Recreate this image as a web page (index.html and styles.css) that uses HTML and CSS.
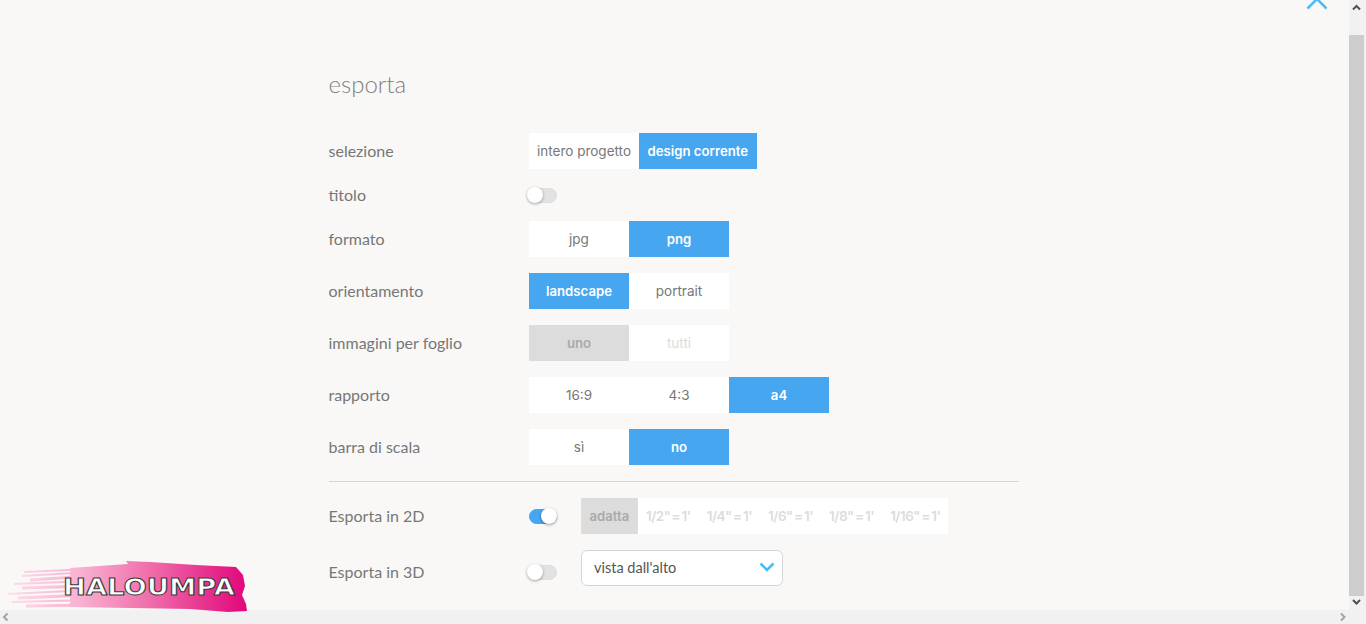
FILE: index.html
```html
<!DOCTYPE html>
<html lang="it">
<head>
  <meta charset="UTF-8" />
  <title>esporta</title>
  <link rel="stylesheet" href="styles.css">
</head>
<body>
  <div class="window">
    <div class="view">
      <svg class="close-btn" width="24" height="14" viewBox="0 0 24 14"><path d="M2.500 11.500 L12 2 L21.500 11.500" fill="none" stroke="#45bdf8" stroke-width="2.500"/></svg>
      <main class="panel">
        <h1 class="title">esporta</h1>
        <div class="rows">
          <div class="row">
            <span class="label">selezione</span>
            <div class="seg">
              <button class="opt auto">intero progetto</button>
              <button class="opt auto on">design corrente</button>
            </div>
          </div>
          <div class="row short">
            <span class="label">titolo</span>
            <span class="toggle"></span>
          </div>
          <div class="row">
            <span class="label">formato</span>
            <div class="seg">
              <button class="opt">jpg</button>
              <button class="opt on">png</button>
            </div>
          </div>
          <div class="row">
            <span class="label">orientamento</span>
            <div class="seg">
              <button class="opt on">landscape</button>
              <button class="opt">portrait</button>
            </div>
          </div>
          <div class="row">
            <span class="label">immagini per foglio</span>
            <div class="seg">
              <button class="opt grey">uno</button>
              <button class="opt off">tutti</button>
            </div>
          </div>
          <div class="row">
            <span class="label">rapporto</span>
            <div class="seg">
              <button class="opt">16:9</button>
              <button class="opt">4:3</button>
              <button class="opt on">a4</button>
            </div>
          </div>
          <div class="row">
            <span class="label">barra di scala</span>
            <div class="seg">
              <button class="opt">sì</button>
              <button class="opt on">no</button>
            </div>
          </div>
          <hr class="divider">
          <div class="row">
            <span class="label">Esporta in 2D</span>
            <span class="toggle active"></span>
            <div class="seg scale">
              <button class="opt small grey">adatta</button>
              <button class="opt small off">1/2" = 1'</button>
              <button class="opt small off">1/4" = 1'</button>
              <button class="opt small off">1/6" = 1'</button>
              <button class="opt small off">1/8" = 1'</button>
              <button class="opt small off">1/16" = 1'</button>
            </div>
          </div>
          <div class="row low">
            <span class="label">Esporta in 3D</span>
            <span class="toggle"></span>
            <div class="select">
              <span>vista dall'alto</span>
              <svg width="16" height="10" viewBox="0 0 16 10"><path d="M1.500 1.500 L8 8 L14.500 1.500" fill="none" stroke="#45bdf8" stroke-width="2.500"/></svg>
            </div>
          </div>
        </div>
      </main>
    </div>
    <div class="vbar">
      <svg class="arrow" width="15" height="17" viewBox="0 0 15 17"><path d="M4 9.500 L7.500 6 L11 9.500" fill="none" stroke="#505050" stroke-width="2"/></svg>
      <div class="vthumb"></div>
      <svg class="arrow" width="15" height="17" viewBox="0 0 15 17"><path d="M4 7 L7.500 10.500 L11 7" fill="none" stroke="#505050" stroke-width="2"/></svg>
    </div>
  </div>
  <div class="hbar">
    <svg width="17" height="14" viewBox="0 0 17 14"><path d="M7.500 3.500 L4 7 L7.500 10.500" fill="none" stroke="#a3a3a3" stroke-width="2"/></svg>
    <svg width="32" height="14" viewBox="0 0 32 14"><path d="M7 3.500 L10.500 7 L7 10.500" fill="none" stroke="#a3a3a3" stroke-width="2"/></svg>
  </div>

  <div class="logo">
    <svg width="250" height="56" viewBox="0 0 250 56">
      <defs>
        <linearGradient id="brush" gradientUnits="userSpaceOnUse" x1="5" x2="245" y1="0" y2="0">
          <stop offset="0" stop-color="#fde0ec"/>
          <stop offset="0.3" stop-color="#f9b4d2"/>
          <stop offset="0.6" stop-color="#f06eab"/>
          <stop offset="1" stop-color="#e2087c"/>
        </linearGradient>
      </defs>
      <g fill="none" stroke="url(#brush)">
        <path stroke-width="2" d="M24 13 L90 10"/>
        <path stroke-width="2" d="M22 17 L90 13"/>
        <path stroke-width="3" d="M30 21 L90 17"/>
        <path stroke-width="2" d="M14 25 L90 22"/>
        <path stroke-width="3" d="M22 29 L90 27"/>
        <path stroke-width="2" d="M8 35 L90 31"/>
        <path stroke-width="3" d="M18 39 L90 36"/>
        <path stroke-width="2" d="M12 43 L90 41"/>
        <path stroke-width="3" d="M26 47 L90 46"/>
      </g>
      <path fill="url(#brush)" d="M70 9 L128 5 L126 2 L150 3 L196 6 L236 8 L243 16 L245 27 L242 36 L246 45 L247 52 L228 53 L190 50 L130 49 L70 48 Z"/>
    </svg>
    <span class="logo-text">HALOUMPA</span>
  </div>
</body>
</html>
```

FILE: styles.css
```css
html, body {
  margin: 0;
  height: 100%;
  overflow: hidden;
}
body {
  display: flex;
  flex-direction: column;
  background: #f9f8f6;
  font-family: Lato, sans-serif;
  color: #777;
}
.window {
  flex: 1;
  display: flex;
  min-height: 0;
}
.view {
  flex: 1;
  position: relative;
}
.close-btn {
  position: absolute;
  top: -3px;
  right: 20px;
}
.panel {
  padding: 70px 0 0 328.500px;
}
.title {
  margin: 0 0 36px;
  font-size: 24px;
  font-weight: 300;
  line-height: 27px;
  color: #808080;
}
.rows {
  display: flex;
  flex-direction: column;
  gap: 16px;
  width: 691px;
}
.row {
  display: flex;
  align-items: center;
  height: 36px;
}
.row.short {
  height: 20px;
}
.row.low .label,
.row.low .toggle {
  margin-top: 8px;
}
.label {
  width: 200.500px;
  margin-bottom: 2px;
  font-size: 16px;
  color: #777;
}
.row.low .label {
  margin-top: 6px;
  margin-bottom: 0;
}
.seg {
  display: flex;
  background: #fff;
}
.opt {
  width: 100px;
  height: 36px;
  padding: 0;
  border: none;
  background: #fff;
  font-family: Inter, sans-serif;
  font-size: 13.500px;
  color: #777;
}
.opt.auto {
  width: auto;
  padding: 0 8px;
}
.opt.on {
  background: #46a6ef;
  color: #fff;
  font-size: 13.200px;
  font-weight: 600;
}
.opt.grey {
  background: #dcdcdc;
  color: #aaa;
  font-size: 13.200px;
  font-weight: 600;
}
.opt.auto.on {
  padding: 0 8.500px;
}
.opt.off {
  color: #dcdcdc;
}
.opt.small {
  width: auto;
  padding: 0 8.500px;
  font-weight: 600;
}
.opt.small.off {
  padding: 0 8px;
  letter-spacing: -0.500px;
  word-spacing: -1.500px;
}
.scale {
  margin-left: 24px;
}
.toggle {
  position: relative;
  width: 28px;
  height: 15px;
  border: 1px solid #ddd;
  border-radius: 9px;
  background: #e2e2e2;
  box-sizing: border-box;
}
.toggle::after {
  content: "";
  position: absolute;
  top: -1.500px;
  left: -3.500px;
  width: 16px;
  height: 16px;
  border-radius: 50%;
  background: #fff;
  box-shadow: 0 1px 3px rgba(0, 0, 0, 0.35);
}
.toggle.active {
  background: #46a6ef;
  border-color: #46a6ef;
}
.toggle.active::after {
  left: 11px;
}
.select {
  display: flex;
  align-items: center;
  justify-content: space-between;
  width: 202px;
  height: 36px;
  margin-left: 24px;
  padding: 0 7px 2px 12px;
  box-sizing: border-box;
  border: 1px solid #d6d6d6;
  border-radius: 6px;
  background: #fff;
  font-size: 14.500px;
  color: #555;
}
.divider {
  width: 690px;
  height: 1px;
  margin: 0;
  border: none;
  background: #d8d5d0;
}
.vbar {
  width: 17px;
  display: flex;
  flex-direction: column;
  background: #f1f1f1;
}
.vthumb {
  flex: 1;
  width: 15px;
  margin-top: 18px;
  margin-bottom: -3px;
  background: #cdcdcd;
}
.arrow {
  flex: none;
}
.hbar {
  display: flex;
  justify-content: space-between;
  height: 14px;
  background: #f1f1f1;
}
.logo {
  position: absolute;
  left: 0;
  top: 559px;
  width: 250px;
  height: 56px;
}
.logo svg {
  display: block;
}
.logo-text {
  position: absolute;
  left: 63px;
  top: 16px;
  font-family: "DejaVu Sans", sans-serif;
  font-size: 23px;
  font-weight: bold;
  line-height: 24px;
  color: #fff;
  -webkit-text-stroke: 1px #3a3a3a;
  transform: scaleX(1.19);
  transform-origin: left center;
  white-space: nowrap;
}
```
